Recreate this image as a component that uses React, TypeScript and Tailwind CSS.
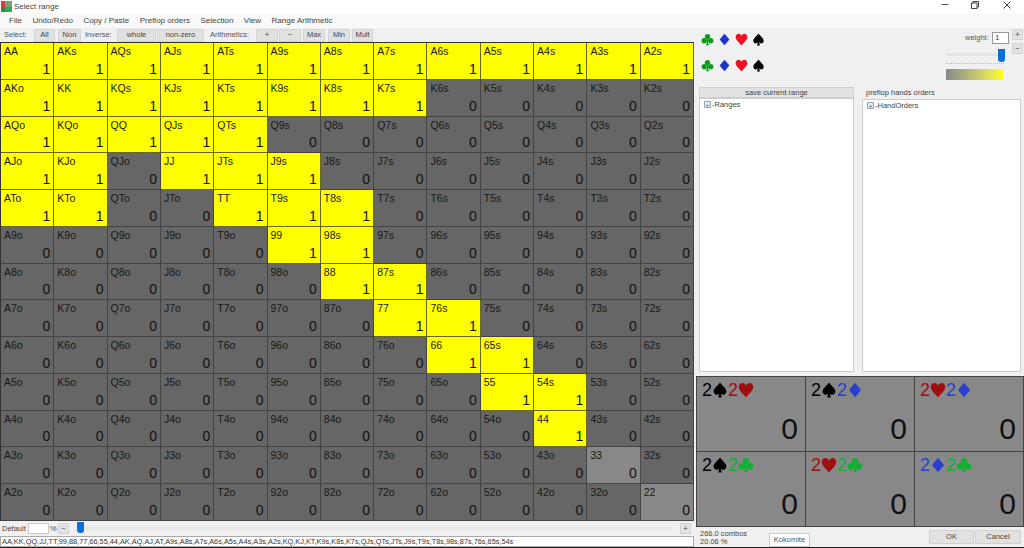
import React from "react";

const R = ["A","K","Q","J","T","9","8","7","6","5","4","3","2"];
const yellow: Record<number, number[]> = {
  0:[0,1,2,3,4,5,6,7,8,9,10,11,12],
  1:[0,1,2,3,4,5,6,7],
  2:[0,1,2,3,4],
  3:[0,1,3,4,5],
  4:[0,1,4,5,6],
  5:[5,6],
  6:[6,7],
  7:[7,8],
  8:[8,9],
  9:[9,10],
  10:[10],
};

function Cell({ r, c }: { r: number; c: number }) {
  const label = r === c ? R[r] + R[c] : r < c ? R[r] + R[c] + "s" : R[c] + R[r] + "o";
  const on = (yellow[r] || []).includes(c);
  const light = r === c && r >= 11;
  const bg = on ? "bg-[#ffff00] border-[#66660a]" : light ? "bg-[#888888] border-[#4a4a4a]" : "bg-[#666666] border-[#444444]";
  return (
    <div className={`${bg} border-r border-b flex flex-col justify-between pl-[3px] pr-[3px] min-w-0 overflow-hidden`}>
      <div className="text-[10.5px] leading-[13px] mt-[2px] text-[#181818]">{label}</div>
      <div className="text-[14px] leading-[16px] text-right text-[#111111] mb-[2px]">{on ? 1 : 0}</div>
    </div>
  );
}

function Btn({ w, children }: { w: string; children: React.ReactNode }) {
  return (
    <div className={`${w} h-[13px] bg-[#e1e1e1] border border-[#d4d4d4] flex items-center justify-center text-[7.5px] text-[#444444]`}>
      {children}
    </div>
  );
}

const Club = ({ s = 15, c = "#0f9a1c" }: { s?: number; c?: string }) => (
  <svg width={s} height={s} viewBox="0 0 16 16" fill={c}>
    <circle cx="8" cy="4.4" r="3.3" /><circle cx="4" cy="9.6" r="3.3" /><circle cx="12" cy="9.6" r="3.3" />
    <path d="M7.3 6h1.4v6l1.2 3H6.1l1.2-3z" />
  </svg>
);
const Diamond = ({ s = 15, c = "#1c35c8" }: { s?: number; c?: string }) => (
  <svg width={s} height={s} viewBox="0 0 16 16" fill={c}><path d="M8 .8 14 8l-6 7.2L2 8z" /></svg>
);
const Heart = ({ s = 15, c = "#ee1122" }: { s?: number; c?: string }) => (
  <svg width={s} height={s} viewBox="0 0 16 16" fill={c}>
    <path d="M8 15.4C5 11.6.8 8.6.8 4.9.8 2.6 2.5 1 4.4 1 6 1 7.3 1.9 8 3.4 8.7 1.9 10 1 11.6 1c1.9 0 3.6 1.6 3.6 3.9 0 3.7-4.2 6.7-7.2 10.5z" />
  </svg>
);
const Spade = ({ s = 15, c = "#000000" }: { s?: number; c?: string }) => (
  <svg width={s} height={s} viewBox="0 0 16 16" fill={c}>
    <path d="M8 .6C6.4 3.4 1.6 6.2 1.6 9.6c0 2 1.5 3.2 3 3.2 1 0 1.9-.5 2.6-1.3L6.2 15.4h3.6l-1-3.9c.7.8 1.6 1.3 2.6 1.3 1.5 0 3-1.2 3-3.2C14.4 6.2 9.6 3.4 8 .6z" />
  </svg>
);

type S = "s" | "h" | "d" | "c";
const color: Record<S, string> = { s: "#000000", h: "#a00f0f", d: "#2a3fd0", c: "#10b030" };
function Suit({ k }: { k: S }) {
  const c = color[k];
  const Ic = k === "s" ? Spade : k === "h" ? Heart : k === "d" ? Diamond : Club;
  return (
    <span className="flex items-center">
      <span className="text-[18px] leading-[20px]" style={{ color: c }}>2</span>
      <Ic s={16} c={c} />
    </span>
  );
}
function Combo({ a, b }: { a: S; b: S }) {
  return (
    <div className="bg-[#888888] border-r border-b border-[#444444] flex flex-col justify-between pl-[5px] pr-[7px]">
      <div className="flex mt-[3px]"><Suit k={a} /><Suit k={b} /></div>
      <div className="text-[30px] leading-[30px] text-right text-[#111111] mb-[7px]">0</div>
    </div>
  );
}

const Plus = () => (
  <span className="w-[7px] h-[7px] border border-[#9aa3b5] bg-[#e6e9f2] flex items-center justify-center text-[6px] leading-none text-[#555555] shrink-0">+</span>
);

export default function App() {
  const rows = Array.from({ length: 13 }, (_, r) => r);
  return (
    <div className="relative w-[1024px] h-[548px] overflow-hidden bg-[#f0f0f0] flex flex-col text-[#444444]" style={{ fontFamily: '"Liberation Sans", Arial, sans-serif' }}>
      {/* title bar */}
      <div className="h-[13px] bg-white flex items-center shrink-0">
        <svg width="11" height="11" viewBox="0 0 11 11" className="ml-[1px]">
          <rect width="4" height="6" fill="#e23a3a" /><rect x="4" width="7" height="6" fill="#7aa07a" />
          <rect y="6" width="4" height="5" fill="#2d8a3e" /><rect x="4" y="6" width="7" height="5" fill="#32a852" />
        </svg>
        <span className="ml-[2px] text-[8px] text-[#444444]">Select range</span>
        <div className="ml-auto flex items-center mb-[4px]">
          <svg width="10" height="10" viewBox="0 0 10 10" className="mr-[20px]"><path d="M1.5 4.5h7" stroke="#555555" /></svg>
          <svg width="10" height="10" viewBox="0 0 10 10" className="mr-[22px]" fill="none" stroke="#444444"><path d="M1.5 3h5.5v5.5H1.5zM3 3V1.5h5.5V7H7" /></svg>
          <svg width="10" height="10" viewBox="0 0 10 10" className="mr-[12px]" stroke="#444444"><path d="M1.5 1.5l7 7M8.5 1.5l-7 7" /></svg>
        </div>
      </div>
      {/* menu */}
      <div className="h-[15px] bg-[#f9f9f9] flex items-center pl-[9px] gap-[10.5px] text-[8px] text-[#444444] shrink-0">
        <span>File</span><span>Undo/Redo</span><span>Copy / Paste</span><span>Preflop orders</span><span>Selection</span><span>View</span><span>Range Arithmetic</span>
      </div>
      <div className="flex flex-1 min-h-0">
        {/* left column */}
        <div className="w-[694px] flex flex-col shrink-0">
          <div className="h-[14px] flex items-center pl-[4px] text-[7.5px] text-[#555555] shrink-0">
            <span className="w-[30px]">Select:</span>
            <Btn w="w-[21px]">All</Btn>
            <Btn w="w-[23px] ml-[3px]">Non</Btn>
            <span className="ml-[4px] w-[32px]">Inverse:</span>
            <Btn w="w-[39px]">whole</Btn>
            <Btn w="w-[47px] ml-[1px]">non-zero</Btn>
            <span className="ml-[6px] w-[46px]">Arithmetics:</span>
            <Btn w="w-[22px]">+</Btn>
            <Btn w="w-[22px] ml-[1px]">−</Btn>
            <Btn w="w-[22px] ml-[2px]">Max</Btn>
            <Btn w="w-[22px] ml-[3px]">Min</Btn>
            <Btn w="w-[21px] ml-[2px]">Mult</Btn>
          </div>
          <div className="h-[479px] border-t border-l border-[#333333] grid grid-cols-[repeat(13,minmax(0,1fr))] grid-rows-[repeat(13,minmax(0,1fr))] shrink-0">
            {rows.map((r) => rows.map((c) => <Cell key={`${r}-${c}`} r={r} c={c} />))}
          </div>
          <div className="h-[15px] flex items-center pl-[2px] text-[7.5px] text-[#444444] shrink-0">
            <span className="w-[26px]">Default</span>
            <div className="w-[21px] h-[11px] bg-white border border-[#c8c8c8]" />
            <span className="ml-[1px] w-[8px]">%</span>
            <Btn w="w-[11px] !h-[11px]">−</Btn>
            <div className="flex-1 flex items-center ml-[8px] mr-[7px] relative">
              <div className="flex-1 h-[3px] bg-[#e6e6e6] ml-[3px]" />
              <div className="absolute left-0 top-[-5px] w-[7px] h-[11px] rounded-b-[3px] bg-[#0a6fd8]" />
            </div>
            <Btn w="w-[11px] !h-[11px] mr-[3px]">+</Btn>
          </div>
          <div className="h-[11px] bg-white border border-[#aaaaaa] flex items-center pl-[1px] text-[7.35px] text-[#333333] overflow-hidden whitespace-nowrap shrink-0">
            AA,KK,QQ,JJ,TT,99,88,77,66,55,44,AK,AQ,AJ,AT,A9s,A8s,A7s,A6s,A5s,A4s,A3s,A2s,KQ,KJ,KT,K9s,K8s,K7s,QJs,QTs,JTs,J9s,T9s,T8s,98s,87s,76s,65s,54s
          </div>
        </div>
        {/* right column */}
        <div className="flex-1 flex flex-col min-w-0">
          <div className="h-[59px] relative shrink-0 pl-[7px] pt-[5px]">
            <div className="flex gap-[4px] w-fit"><Club s={13} /><Diamond s={13} /><Heart s={13} /><Spade s={13} /></div>
            <div className="flex gap-[4px] w-fit mt-[13px]"><Club s={13} /><Diamond s={13} /><Heart s={13} /><Spade s={13} /></div>
            <div className="absolute left-[271px] top-[4px] text-[7.5px] text-[#555555]">weight:</div>
            <div className="absolute left-[298px] top-[4px] w-[17px] h-[12px] bg-white border border-[#999999] text-[8px] pl-[2px] leading-[10px]">1</div>
            <div className="absolute left-[318px] top-[1px] flex flex-col gap-[3px]">
              <Btn w="w-[11px] !h-[11px]">+</Btn>
              <Btn w="w-[11px] !h-[11px]">−</Btn>
            </div>
            <div className="absolute left-[252px] top-[21px] w-[58px] flex flex-col">
              <div className="relative h-[10px] flex items-center">
                <div className="w-full h-[3px] bg-[#e3e6e6]" />
                <div className="absolute left-[52px] top-[0px] w-[7px] h-[13px] rounded-b-[3px] bg-[#0a6fd8]" />
              </div>
              <div className="border-b border-dotted border-[#bbbbbb] mt-[4px]" />
              <div className="h-[11px] mt-[5px] w-[57px] bg-gradient-to-r from-[#888888] to-[#ffff00]" />
            </div>
          </div>
          <div className="flex h-[285px] pl-[5px] pr-[3px] gap-[8px] shrink-0">
            <div className="w-[155px] flex flex-col">
              <div className="h-[11px] bg-[#e1e1e1] border border-[#d0d0d0] flex items-center justify-center text-[7.5px] text-[#444444] shrink-0">save current range</div>
              <div className="flex-1 bg-white border border-[#cccccc] flex items-start pl-[4px] pt-[2px] gap-[1px] text-[7.5px] text-[#444444]"><Plus /><span className="leading-[8px]">-Ranges</span></div>
            </div>
            <div className="flex-1 flex flex-col">
              <div className="h-[12px] flex items-center text-[7.5px] pl-[4px] text-[#444444] shrink-0">preflop hands orders</div>
              <div className="flex-1 bg-white border border-[#cccccc] flex items-start pl-[4px] pt-[2px] gap-[1px] text-[7.5px] text-[#444444]"><Plus /><span className="leading-[8px]">-HandOrders</span></div>
            </div>
          </div>
          <div className="ml-[2px] h-[151px] mt-[4px] border-t border-l border-[#444444] grid grid-cols-3 grid-rows-2 shrink-0">
            <Combo a="s" b="h" /><Combo a="s" b="d" /><Combo a="h" b="d" />
            <Combo a="s" b="c" /><Combo a="h" b="c" /><Combo a="d" b="c" />
          </div>
          <div className="flex-1 flex items-start pl-[6px] pr-[3px] text-[7.5px] text-[#444444]">
            <div className="leading-[8px] mt-[3px]">266.0 combos<br />20.06 %</div>
            <div className="ml-auto flex gap-[1px] mt-[3px]">
              <div className="w-[45px] h-[14px] bg-[#e1e1e1] border border-[#d0d0d0] flex items-center justify-center">OK</div>
              <div className="w-[46px] h-[14px] bg-[#e1e1e1] border border-[#d0d0d0] flex items-center justify-center">Cancel</div>
            </div>
          </div>
        </div>
      </div>
      <div className="h-[1px] bg-[#222222] shrink-0" />
      <div className="absolute left-[769px] top-[533px] w-[41px] h-[14px] bg-white border border-[#cccccc] flex items-center justify-center text-[7.5px] text-[#555555]">Kokomite</div>
    </div>
  );
}
